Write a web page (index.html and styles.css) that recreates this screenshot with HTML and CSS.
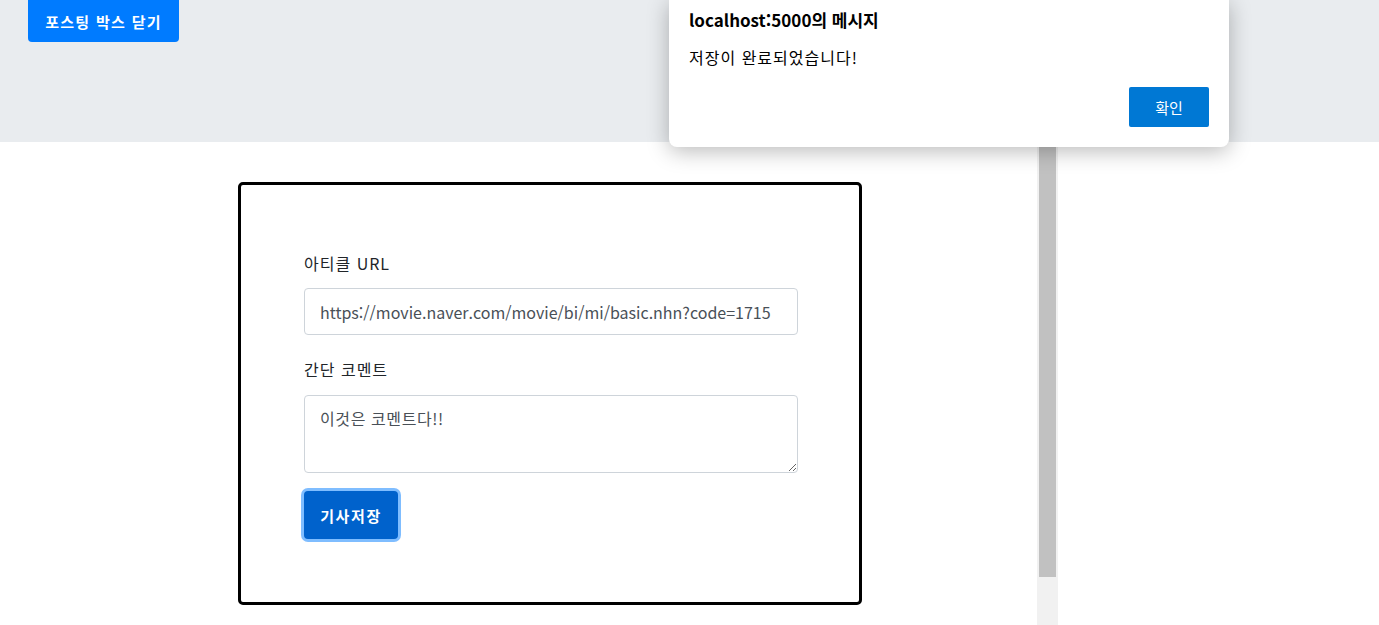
FILE: index.html
```html
<!DOCTYPE html>
<html lang="ko">
<head>
<meta charset="utf-8">
<title>나홀로 메모장</title>
<link rel="stylesheet" href="styles.css">
</head>
<body>
<header class="top">
  <button class="btn-close">포스팅 박스 닫기</button>
</header>
<main class="main">
  <form class="card">
    <div class="group">
      <label class="label">아티클 URL</label>
      <input class="field" type="text" value="https://movie.naver.com/movie/bi/mi/basic.nhn?code=1715">
    </div>
    <div class="group">
      <label class="label">간단 코멘트</label>
      <textarea class="field area">이것은 코멘트다!!</textarea>
    </div>
    <button type="button" class="btn-save">기사저장</button>
  </form>
</main>
<div class="scrollbar"><div class="thumb"></div></div>
<div class="dialog">
  <div class="dlg-title">localhost:5000의 메시지</div>
  <div class="dlg-msg">저장이 완료되었습니다!</div>
  <div class="dlg-actions"><button class="dlg-ok">확인</button></div>
</div>
</body>
</html>
```
FILE: styles.css
```css
* { box-sizing: border-box; }
html, body { margin: 0; padding: 0; background: #fff; overflow: hidden; }
body {
  font-family: "Noto Sans CJK KR", "Noto Sans", sans-serif;
  color: #212529;
  height: 625px;
  position: relative;
}
.top {
  height: 142px;
  background: #e9ecef;
  padding-left: 28px;
}
.btn-close {
  display: block;
  width: 151px;
  height: 42px;
  border: none;
  border-radius: 0 0 4px 4px;
  background: #007bff;
  color: #fff;
  font-family: inherit;
  font-weight: 700;
  font-size: 15px;
  letter-spacing: 1.3px;
  padding: 0;
}
.main {
  padding-top: 40px;
  padding-left: 238px;
}
.card {
  width: 624px;
  height: 423px;
  border: 3px solid #000;
  border-radius: 5px;
  padding: 66px 61px 0 63px;
  display: flex;
  flex-direction: column;
}
.group {
  display: flex;
  flex-direction: column;
  margin-bottom: 22px;
}
.group:nth-of-type(2) { margin-bottom: 18px; }
.label {
  font-size: 16px;
  line-height: 24px;
  margin-bottom: 13px;
  letter-spacing: 1px;
  color: #212529;
}
.group:nth-of-type(2) .label { margin-bottom: 14px; }
.field {
  width: 494px;
  height: 47px;
  border: 1px solid #ced4da;
  border-radius: 4px;
  padding: 0 15px;
  font-family: inherit;
  font-size: 16px;
  color: #495057;
  background: #fff;
}
.area {
  height: 78px;
  padding: 10px 15px;
  resize: vertical;
  line-height: 24px;
  letter-spacing: 0.6px;
}
.btn-save {
  align-self: flex-start;
  margin-left: 0;
  width: 94px;
  height: 48px;
  border: none;
  border-radius: 4px;
  background: #0062cc;
  color: #fff;
  font-family: inherit;
  font-weight: 700;
  font-size: 15px;
  letter-spacing: 1.6px;
  box-shadow: 0 0 0 3px rgba(0, 123, 255, 0.5);
}
.scrollbar {
  position: absolute;
  left: 1037px;
  top: 142px;
  width: 21px;
  height: 483px;
  background: #f1f1f1;
}
.thumb {
  margin: 5px 0 0 2px;
  width: 17px;
  height: 430px;
  background: #c1c1c1;
}
.dialog {
  position: absolute;
  left: 669px;
  top: 0;
  width: 560px;
  height: 147px;
  background: #fff;
  border-radius: 0 0 8px 8px;
  box-shadow: 0 4px 22px rgba(0, 0, 0, 0.28);
  padding: 8px 20px 20px 20px;
  display: flex;
  flex-direction: column;
  font-family: "Noto Sans CJK KR", "Noto Sans", sans-serif;
}
.dlg-title {
  font-weight: 700;
  font-size: 17px;
  line-height: 24px;
  color: #000;
}
.dlg-msg {
  margin-top: 13px;
  font-size: 16px;
  line-height: 24px;
  letter-spacing: 1px;
  color: #000;
}
.dlg-actions {
  margin-top: auto;
  display: flex;
  justify-content: flex-end;
}
.dlg-ok {
  width: 80px;
  height: 40px;
  border: none;
  border-radius: 2px;
  background: #0078d4;
  color: #fff;
  font-family: inherit;
  font-size: 15px;
}
```
